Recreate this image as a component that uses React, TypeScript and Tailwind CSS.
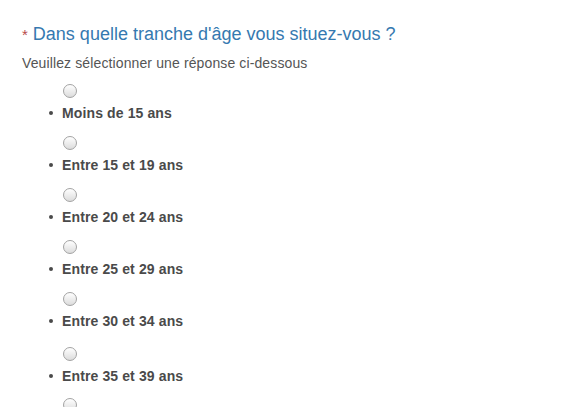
const options = [
  "Moins de 15 ans",
  "Entre 15 et 19 ans",
  "Entre 20 et 24 ans",
  "Entre 25 et 29 ans",
  "Entre 30 et 34 ans",
  "Entre 35 et 39 ans",
];

function Radio() {
  return (
    <div className="w-[14px] h-[14px] rounded-full border border-[#a3a3a3] bg-gradient-to-b from-[#ffffff] to-[#dcdcdc]" />
  );
}

export default function App() {
  return (
    <div className="w-[585px] h-[407px] overflow-hidden bg-white font-['Liberation_Sans',Arial,sans-serif] pl-[22px] pt-[22px]">
      <h1 className="text-[18px] leading-[24px] text-[#3579b0]">
        <span className="text-[#b94a48] text-[15px] mr-[5px]">*</span>
        Dans quelle tranche d'âge vous situez-vous ?
      </h1>
      <p className="mt-[7px] text-[14px] tracking-[0.12px] leading-[18px] text-[#555555]">
        Veuillez sélectionner une réponse ci-dessous
      </p>
      <ul className="mt-[12px] flex flex-col gap-[14px]">
        {options.map((o, i) => (
          <li key={o} className={i === 5 ? "mt-[3px]" : ""}>
            <div className="ml-[41px]">
              <Radio />
            </div>
            <div className="mt-[6px] flex items-center leading-[18px]">
              <span className="ml-[27px] w-[4px] h-[4px] rounded-full bg-[#4a4a4a]" />
              <span className="ml-[9px] text-[14px] tracking-[0.12px] font-bold text-[#4a4a4a]">{o}</span>
            </div>
          </li>
        ))}
        <li className="ml-[41px] -mt-[1px]">
          <Radio />
        </li>
      </ul>
    </div>
  );
}
